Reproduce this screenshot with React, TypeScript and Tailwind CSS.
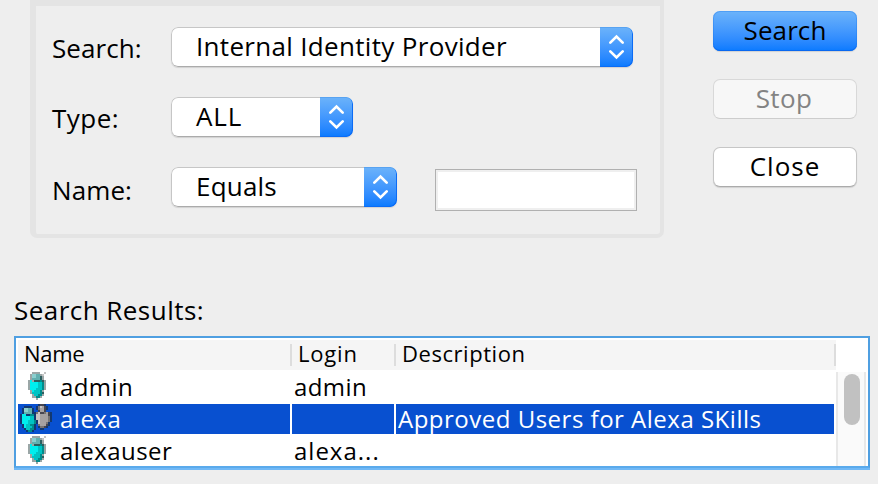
import React from "react";

type ComboProps = { text: string; width: string; spacing: string };

function Chevrons() {
  return (
    <svg width="33" height="40" viewBox="0 0 33 40" fill="none" stroke="white" strokeWidth="2.7" strokeLinecap="round" strokeLinejoin="miter">
      <path d="M10.3 15.6 L16.5 9.6 L22.7 15.6" />
      <path d="M10.3 24.4 L16.5 30.4 L22.7 24.4" />
    </svg>
  );
}

function Combo({ text, width, spacing }: ComboProps) {
  return (
    <div className={`flex h-10 overflow-hidden rounded-[7px] shadow-[0_1px_1px_rgba(0,0,0,0.12)] ${width}`}>
      <div className={`flex-1 rounded-l-[7px] border border-r-0 border-[#c6c6c6] border-b-[#ababab] bg-white pl-6 leading-[36px] whitespace-nowrap ${spacing}`}>
        {text}
      </div>
      <div className="w-[33px] rounded-r-[7px] bg-gradient-to-b from-[#6cb3fa] to-[#067aff] shadow-[inset_-1px_-1px_0_#0c6cf5,inset_0_1px_0_#58a3f1]">
        <Chevrons />
      </div>
    </div>
  );
}

const palette: Record<string, string> = {
  g: "#9ba6a6",
  o: "#c4c4c4",
  h: "#8bcfcf",
  H: "#62b0b0",
  c: "#00eeee",
  t: "#00c4c4",
  d: "#008c8c",
  k: "#2e5f5f",
  b: "#123870",
  w: "#c8c4c4",
  m: "#a5a1a1",
  n: "#777474",
  s: "#474650",
};

const userPixels = [
  "..gggg..o",
  ".ghhHHgo.",
  ".ghhHHkg.",
  ".gHHHHkg.",
  "gcgkkkdkg",
  "gccccttdg",
  "gccccttdg",
  "gccccttdg",
  "gccctttdg",
  ".gctttdg.",
  ".gttttdk.",
  "..gttddg.",
  "..ggddg..",
  "....g....",
];

const groupPixels = [
  ".........bssb...",
  "..bbbb..bnwmsb..",
  ".bhhHHb.bnmmsb..",
  ".bhhHHb..smms...",
  ".bHHHHbbnwssnmsb",
  "bccbbddbwwmmmmsb",
  "bccccttbwwmmmmnb",
  "bccccttbwwmmmmnb",
  "bccctttdbwmmmmnb",
  "bccctttdbwmmmnb.",
  ".bcttddb.nmmmsb.",
  ".bctttdb.bnnsb..",
  "..bttddb..bb....",
  "...bddb.........",
];

function PixelIcon({ rows, left }: { rows: string[]; left: number }) {
  return (
    <svg width="34" height="30" viewBox="0 0 34 30" shapeRendering="crispEdges">
      {rows.flatMap((row, y) =>
        [...row].map((cell, x) =>
          palette[cell] ? <rect key={`${x}-${y}`} x={left + x * 2} y={y * 2} width="2" height="2" fill={palette[cell]} /> : null
        )
      )}
    </svg>
  );
}

const columns = "grid grid-cols-[272px_102px_438px] gap-x-[2px]";

export default function App() {
  return (
    <main className="h-[484px] w-[878px] overflow-hidden bg-[#eeeeee] font-['Open_Sans',sans-serif] text-[26px] text-black">
      <div className="flex h-[238px] pl-[30px]">
        <section className="flex w-[634px] flex-col gap-[30px] rounded-b-[7px] border-4 border-t-[6px] border-l-[6px] border-[#e4e4e4] pt-[21px] pl-4">
          <div className="flex">
            <label className="w-[119px] pt-[2px] leading-[38px] tracking-[0.05px]">Search:</label>
            <Combo text="Internal Identity Provider" width="w-[462px]" spacing="tracking-[0.32px]" />
          </div>
          <div className="flex">
            <label className="w-[119px] pt-[2px] leading-[38px] tracking-[0.5px]">Type:</label>
            <Combo text="ALL" width="w-[182px]" spacing="tracking-[0.9px]" />
          </div>
          <div className="flex h-11">
            <label className="w-[119px] pt-1 leading-[38px] tracking-[0.1px]">Name:</label>
            <Combo text="Equals" width="w-[226px]" spacing="tracking-[0.2px]" />
            <input aria-label="Name" className="mt-[2px] ml-[38px] h-[42px] w-[202px] border border-[#b0b0b0] bg-white shadow-[inset_0_0_0_2px_#efefef] outline-none" />
          </div>
        </section>
        <div className="ml-[49px] flex w-36 flex-col gap-7 pt-[11px] text-center">
          <button className="h-10 rounded-[7px] bg-gradient-to-b from-[#6cb3fa] to-[#067aff] pb-[2px] leading-[38px] tracking-[0.1px] shadow-[inset_0_-1px_0_#0968f0,inset_0_0_0_1px_rgba(30,120,235,0.35),0_1px_1px_rgba(0,0,0,0.12)]">Search</button>
          <button className="h-10 rounded-[7px] border border-[#d8d8d8] border-b-[#cdcdcd] bg-[#f7f7f7] pr-[2px] pb-[2px] leading-[36px] tracking-[0.4px] text-[#838383]">Stop</button>
          <button className="h-10 rounded-[7px] border border-[#c6c6c6] border-b-[#ababab] bg-white pb-[2px] leading-[36px] tracking-[1px] shadow-[0_1px_1px_rgba(0,0,0,0.12)]">Close</button>
        </div>
      </div>
      <h2 className="mt-[53px] ml-[14px] h-[45px] leading-[38px] tracking-[0.46px]">Search Results:</h2>
      <section className="ml-[14px] h-[134px] w-[856px] border-b-2 border-[#70b8f6]">
        <div className="flex h-[132px] border-2 border-[#4f9fe1] border-b-[#5aaaec] bg-white pt-[2px] pl-[2px]">
          <div className="w-[818px] text-[24px]">
            <div className="grid h-[30px] grid-cols-[274px_104px_440px] bg-[#f5f5f5] py-1 text-[22px] leading-[18px]">
              <div className="border-r-2 border-[#dddddd] pl-[6px] tracking-[-0.3px]">Name</div>
              <div className="border-r-2 border-[#dddddd] pl-[6px] tracking-[0.8px]">Login</div>
              <div className="border-r-2 border-[#dddddd] pl-[6px] tracking-[0.55px]">Description</div>
            </div>
            <div className={`${columns} mt-[2px] h-[30px] leading-[30px] tracking-[0.4px]`}>
              <div className="flex"><PixelIcon rows={userPixels} left={10} /><span className="ml-2">admin</span></div>
              <div className="pl-[2px]">admin</div>
            </div>
            <div className={`${columns} mt-[2px] h-[30px] leading-[30px] tracking-[0.5px] text-white`}>
              <div className="flex bg-[#0850d0]"><PixelIcon rows={groupPixels} left={2} /><span className="ml-2">alexa</span></div>
              <div className="bg-[#0850d0]" />
              <div className="bg-[#0850d0] pl-[2px]">Approved Users for Alexa SKills</div>
            </div>
            <div className={`${columns} mt-[2px] h-[30px] leading-[30px] tracking-[0.45px]`}>
              <div className="flex"><PixelIcon rows={userPixels} left={10} /><span className="ml-2">alexauser</span></div>
              <div className="pl-[2px] tracking-[1px]">alexa...</div>
            </div>
          </div>
          <div className="mt-8 h-[94px] w-[30px] border-x-2 border-[#e8e8e8] bg-[#fafafa] pt-[2px] pl-[6px]">
            <div className="h-[51px] w-4 rounded-full bg-[#c1c1c1]" />
          </div>
        </div>
      </section>
    </main>
  );
}
